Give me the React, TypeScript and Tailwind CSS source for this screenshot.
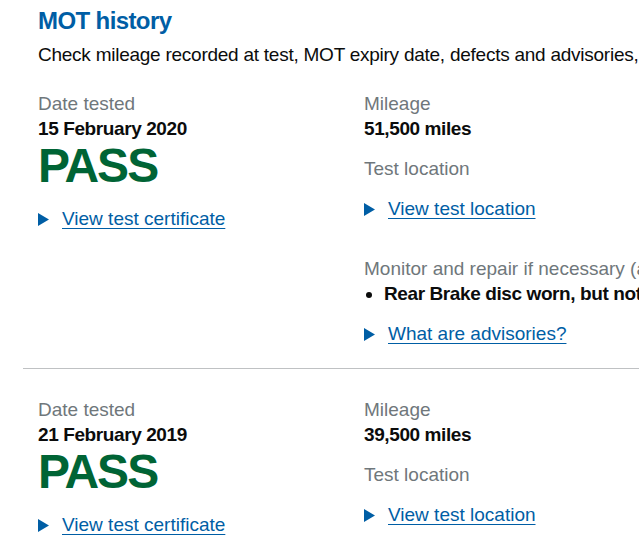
const blue = "text-[#005ea5]";

function Arrow() {
  return (
    <svg viewBox="0 0 11 13" className="w-[11px] h-[13px] shrink-0 fill-[#005ea5]">
      <path d="M0 0 L11 6.5 L0 13 Z" />
    </svg>
  );
}

function ToggleLink({ label }: { label: string }) {
  return (
    <div className="flex items-center gap-[13px] h-[25px]">
      <Arrow />
      <a href="#" className={`${blue} underline underline-offset-[3px] decoration-1`}>
        {label}
      </a>
    </div>
  );
}

type Test = {
  date: string;
  mileage: string;
  advisories?: string[];
};

const tests: Test[] = [
  {
    date: "15 February 2020",
    mileage: "51,500 miles",
    advisories: ["Rear Brake disc worn, but not excessively (1.2.4)"],
  },
  { date: "21 February 2019", mileage: "39,500 miles" },
];

function TestRow({ test }: { test: Test }) {
  return (
    <div className="grid grid-cols-[326px_1fr] pl-[15px] pt-[28px] pb-[21px] border-b border-[#bfc1c3]">
      <div>
        <p className="text-[#6f777b] leading-[25px]">Date tested</p>
        <p className="font-bold leading-[25px] tracking-[-0.4px]">{test.date}</p>
        <p className="text-[#006435] font-bold text-[48px] leading-[50px] tracking-[-2px]">PASS</p>
        <div className="mt-[16px]">
          <ToggleLink label="View test certificate" />
        </div>
      </div>
      <div className="whitespace-nowrap">
        <p className="text-[#6f777b] leading-[25px]">Mileage</p>
        <p className="font-bold leading-[25px] tracking-[-0.4px]">{test.mileage}</p>
        <p className="text-[#6f777b] leading-[25px] mt-[15px]">Test location</p>
        <div className="mt-[16px]">
          <ToggleLink label="View test location" />
        </div>
        {test.advisories && (
          <>
            <p className="text-[#6f777b] leading-[25px] mt-[34px]">
              Monitor and repair if necessary (advisories)
            </p>
            <ul className="list-disc pl-[20px]">
              {test.advisories.map((a) => (
                <li key={a} className="font-bold leading-[25px] tracking-[-0.4px]">
                  {a}
                </li>
              ))}
            </ul>
            <div className="mt-[16px]">
              <ToggleLink label="What are advisories?" />
            </div>
          </>
        )}
      </div>
    </div>
  );
}

export default function App() {
  return (
    <div
      className="w-[639px] h-[543px] overflow-hidden bg-white text-[#0b0c0c] text-[19px]"
      style={{ fontFamily: '"Liberation Sans", Arial, sans-serif' }}
    >
      <div className="w-[900px] pl-[23px]">
        <div className="pl-[15px]">
          <h2 className={`${blue} font-bold text-[24px] leading-[30px] pt-[6px] tracking-[-0.6px]`}>
            MOT history
          </h2>
          <p className="leading-[25px] mt-[6px] whitespace-nowrap tracking-[-0.25px]">
            Check mileage recorded at test, MOT expiry date, defects and advisories, and more.
          </p>
        </div>
        <div className="-mt-[4px]">
          {tests.map((t) => (
            <TestRow key={t.date} test={t} />
          ))}
        </div>
      </div>
    </div>
  );
}
